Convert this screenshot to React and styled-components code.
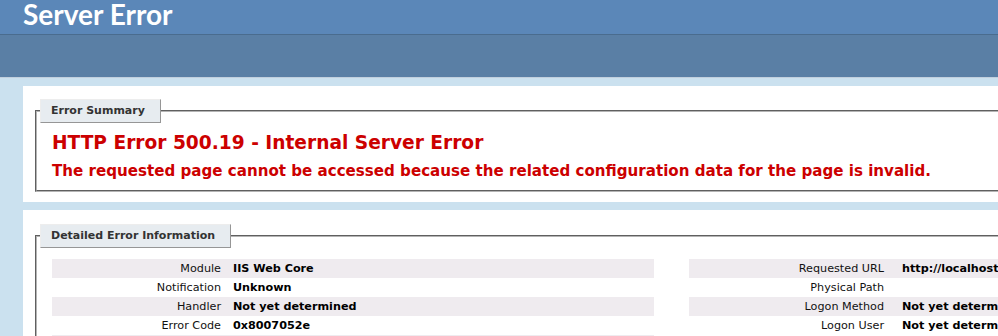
import React from "react";
import styled, { createGlobalStyle } from "styled-components";

const Global = createGlobalStyle`
  html, body { margin: 0; padding: 0; }
  body {
    background: #CBE1EF;
    font-family: "DejaVu Sans", Verdana, sans-serif;
    font-size: 11.2px;
    overflow: hidden;
    width: 998px;
    height: 336px;
  }
`;

const Page = styled.div`
  width: 1800px;
`;

const Header = styled.header`
  height: 34px;
  background: #5B87B8;
  padding: 0 0 0 23px;
  box-sizing: border-box;
  display: flex;
  align-items: flex-start;
`;

const Title = styled.h1`
  margin: 0;
  font-family: "Lato", "Open Sans", sans-serif;
  font-weight: 700;
  font-size: 28px;
  line-height: 26px;
  padding-top: 1px;
  color: #fff;
`;

const VersionBar = styled.div`
  height: 42px;
  background: #5A7FA5;
  border-top: 1px solid #4A6C8E;
  border-bottom: 1px solid #C1CFDD;
`;

const Content = styled.main`
  margin-left: 23px;
  padding-top: 8px;
  display: flex;
  flex-direction: column;
  gap: 8px;
`;

const Panel = styled.section`
  background: #fff;
  padding: 10px;
  width: 1760px;
`;

const Fieldset = styled.fieldset`
  margin: ${(p) => p.$top}px 2px 0;
  padding: 0 15px ${(p) => p.$bottom}px 15px;
  border: 2px groove #b4b4b4;
  min-width: 0;
`;

const Legend = styled.legend`
  color: #333;
  padding: 4px 15px 5px 10px;
  margin: 0 0 0 -12px;
  border-top: 1px solid #EDEDED;
  border-left: 1px solid #EDEDED;
  border-right: 1px solid #969696;
  border-bottom: 1px solid #969696;
  background: #E7ECF0;
  font-weight: bold;
  font-size: 11px;
  line-height: 13px;
`;

const ErrorTitle = styled.h2`
  margin: 9px 0 0;
  font-size: 18.6px;
  line-height: 22px;
  color: #CC0000;
  font-weight: bold;
`;

const ErrorText = styled.h3`
  margin: 8px 0 0;
  font-size: 15.1px;
  line-height: 19px;
  color: #CC0000;
  font-weight: bold;
`;

const Details = styled.div`
  display: flex;
  gap: 35px;
  margin-top: 11px;
`;

const Table = styled.div`
  width: ${(p) => p.$width}px;
  display: flex;
  flex-direction: column;
`;

const Row = styled.div`
  display: grid;
  grid-template-columns: ${(p) => p.$label}px 1fr;
  background: ${(p) => (p.$alt ? "#EFEBEF" : "transparent")};
  line-height: 13px;
`;

const Label = styled.div`
  text-align: right;
  padding: 3px ${(p) => p.$pad}px 3px 0;
  color: #111;
`;

const Value = styled.div`
  padding: 3px 0;
  font-weight: bold;
  color: #000;
  white-space: nowrap;
`;

const leftRows = [
  ["Module", "IIS Web Core"],
  ["Notification", "Unknown"],
  ["Handler", "Not yet determined"],
  ["Error Code", "0x8007052e"],
  ["Config Error", "Can not log on locally"],
];

const rightRows = [
  ["Requested URL", "http://localhost:80/"],
  ["Physical Path", ""],
  ["Logon Method", "Not yet determined"],
  ["Logon User", "Not yet determined"],
];

const DetailTable = ({ rows, width, label, pad }) => (
  <Table $width={width}>
    {rows.map(([k, v], i) => (
      <Row key={k} $alt={i % 2 === 0} $label={label}>
        <Label $pad={pad}>{k}</Label>
        <Value>{v}</Value>
      </Row>
    ))}
  </Table>
);

export default function App() {
  return (
    <Page>
      <Global />
      <Header>
        <Title>Server Error</Title>
      </Header>
      <VersionBar />
      <Content>
        <Panel>
          <Fieldset $top={3} $bottom={9}>
            <Legend>Error Summary</Legend>
            <ErrorTitle>HTTP Error 500.19 - Internal Server Error</ErrorTitle>
            <ErrorText>
              The requested page cannot be accessed because the related configuration data for the page is invalid.
            </ErrorText>
          </Fieldset>
        </Panel>
        <Panel>
          <Fieldset $top={4} $bottom={10}>
            <Legend>Detailed Error Information</Legend>
            <Details>
              <DetailTable rows={leftRows} width={602} label={181} pad={12} />
              <DetailTable rows={rightRows} width={1083} label={213} pad={18} />
            </Details>
          </Fieldset>
        </Panel>
      </Content>
    </Page>
  );
}
